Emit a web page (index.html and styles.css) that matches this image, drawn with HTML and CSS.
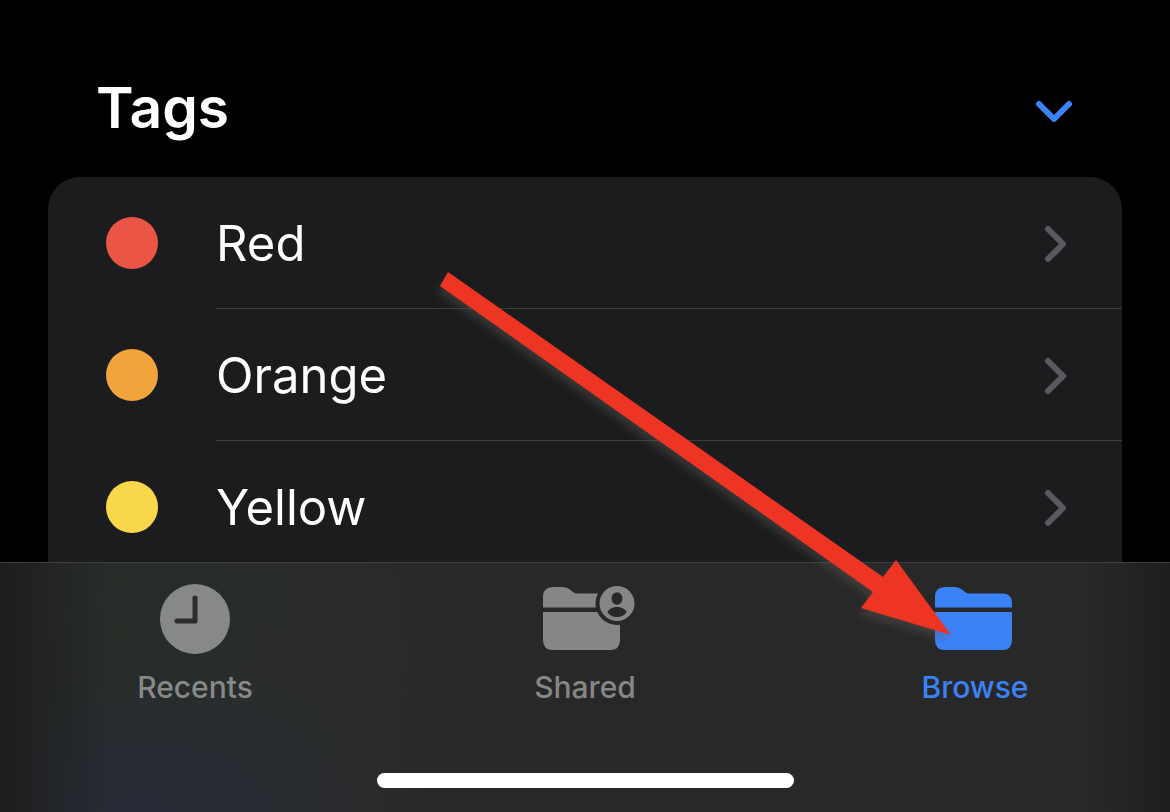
FILE: index.html
```html
<!DOCTYPE html>
<html lang="en">
<head>
    <meta charset="UTF-8">
    <meta name="viewport" content="width=device-width, initial-scale=1.0">
    <title>Browse</title>
    <link rel="stylesheet" href="styles.css">
</head>
<body>

<main class="content">
    <div class="section-header">
        <h1 class="section-title">Tags</h1>
        <button class="collapse" type="button" aria-label="Collapse tags">
            <svg width="40" height="26" viewBox="0 0 40 26"><path d="M5 5L20 20L35 5"/></svg>
        </button>
    </div>

    <!-- Tag list -->
    <nav class="tag-list">
        <a class="tag" href="#red">
            <span class="dot dot-red"></span>
            <span class="tag-body">Red
                <svg class="chevron" width="26" height="40" viewBox="0 0 26 40"><path d="M5 5L20 20L5 35"/></svg>
            </span>
        </a>
        <a class="tag" href="#orange">
            <span class="dot dot-orange"></span>
            <span class="tag-body">Orange
                <svg class="chevron" width="26" height="40" viewBox="0 0 26 40"><path d="M5 5L20 20L5 35"/></svg>
            </span>
        </a>
        <a class="tag" href="#yellow">
            <span class="dot dot-yellow"></span>
            <span class="tag-body">Yellow
                <svg class="chevron" width="26" height="40" viewBox="0 0 26 40"><path d="M5 5L20 20L5 35"/></svg>
            </span>
        </a>
    </nav>
</main>

<!-- Bottom tab bar -->
<footer class="tab-bar">
    <nav class="tabs">
        <a class="tab tab-recents" href="#recents">
            <svg width="100" height="72" viewBox="0 0 100 72">
                <circle cx="50" cy="36" r="35" fill="currentColor"/>
                <path d="M50 15V38H32" fill="none" stroke="#2a2d2b" stroke-width="5" stroke-linecap="round" stroke-linejoin="round"/>
            </svg>
            Recents
        </a>
        <a class="tab" href="#shared">
            <svg width="100" height="72" viewBox="0 0 100 72">
                <path d="M8 24.500V14Q8 4 18 4H28Q32 4 35 6.500L38 9Q40 10.500 43 10.500H75Q85 10.500 85 20V24.500Z" fill="currentColor"/>
                <path d="M8 29H85V57Q85 67 75 67H18Q8 67 8 57Z" fill="currentColor"/>
                <circle cx="82" cy="20.500" r="21.500" fill="#282828"/>
                <circle cx="82" cy="20.500" r="17.500" fill="currentColor"/>
                <ellipse cx="82" cy="15.500" rx="5.500" ry="6.200" fill="#282828"/>
                <path d="M72.500 29C74 25.500 78 24 82 24S90 25.500 91.500 29C90 32 86 34 82 34S74 32 72.500 29Z" fill="#282828"/>
            </svg>
            Shared
        </a>
        <a class="tab tab-active" href="#browse">
            <svg width="100" height="72" viewBox="0 0 100 72">
                <path d="M10 24.500V14Q10 4 20 4H30Q34 4 37 6.500L40 9Q42 10.500 45 10.500H77Q87 10.500 87 20V24.500Z" fill="currentColor"/>
                <path d="M10 29H87V57Q87 67 77 67H20Q10 67 10 57Z" fill="currentColor"/>
            </svg>
            Browse
        </a>
    </nav>
    <div class="home-indicator"></div>
</footer>

<!-- Arrow pointing at the Browse tab -->
<svg class="arrow" viewBox="0 0 1170 812" aria-hidden="true">
    <path d="M448 272L883 577L896 560L951 635L861 608L873 592L440 286Z"/>
</svg>

</body>
</html>
```
FILE: styles.css
```css
* {
    box-sizing: border-box;
}

body {
    margin: 0;
    height: 100vh;
    display: flex;
    flex-direction: column;
    position: relative;
    overflow: hidden;
    background-color: #000;
    color: #fff;
    font-family: Inter, "Liberation Sans", sans-serif;
}

a {
    color: inherit;
    text-decoration: none;
}

.content {
    flex: 1;
    min-height: 0;
    overflow: hidden;
    padding: 72px 48px 0;
}

.section-header {
    display: flex;
    justify-content: space-between;
    align-items: center;
    padding: 0 48px;
    margin-bottom: 33px;
}

.section-title {
    margin: 0;
    font-size: 57px;
    font-weight: 600;
    line-height: 72px;
}

.collapse {
    display: flex;
    padding: 8px 0 0;
    border: 0;
    background: none;
    color: #3b82f7;
    cursor: pointer;
}

.collapse path,
.chevron path {
    fill: none;
    stroke: currentColor;
    stroke-width: 6;
    stroke-linecap: round;
    stroke-linejoin: round;
}

/* Tag list */
.tag-list {
    background-color: #1c1c1e;
    border-radius: 32px 32px 0 0;
}

.tag {
    display: flex;
    align-items: center;
    gap: 58px;
    padding-left: 58px;
    font-size: 49px;
}

.dot {
    width: 52px;
    height: 52px;
    border-radius: 50%;
}

.dot-red {
    background-color: #eb5545;
}

.dot-orange {
    background-color: #f1a33c;
}

.dot-yellow {
    background-color: #f8d74a;
}

.tag-body {
    flex: 1;
    display: flex;
    justify-content: space-between;
    align-items: center;
    height: 132px;
    padding: 2px 53px 0 0;
    border-bottom: 1px solid #3d3d40;
}

.chevron {
    color: #5a5a5e;
}

.tab-bar {
    display: flex;
    flex-direction: column;
    justify-content: space-between;
    height: 250px;
    padding: 20px 0 24px;
    border-top: 1px solid #404040;
    background:
        linear-gradient(90deg, rgba(28, 28, 28, 0.9), rgba(28, 28, 28, 0) 9%, rgba(28, 28, 28, 0) 93%, rgba(28, 28, 28, 0.8)),
        radial-gradient(ellipse 260px 160px at 12% 100%, #262b36, rgba(38, 43, 54, 0)),
        radial-gradient(ellipse 300px 240px at 10% 15%, #272d28, rgba(39, 45, 40, 0)),
        radial-gradient(ellipse 240px 400px at 22% 50%, #2c2d2d, rgba(44, 45, 45, 0)),
        #282828;
}

.tabs {
    display: grid;
    grid-template-columns: repeat(3, 1fr);
}

.tab {
    display: flex;
    flex-direction: column;
    align-items: center;
    gap: 14px;
    color: #868686;
    font-size: 30px;
    font-weight: 500;
    line-height: 36px;
}

.tab-recents {
    color: #868988;
}

.tab-active {
    color: #3b82f7;
}

.home-indicator {
    align-self: center;
    width: 417px;
    height: 15px;
    border-radius: 8px;
    background-color: #fff;
}

/* Arrow lies over the whole screen */
.arrow {
    position: absolute;
    inset: 0;
    width: 100%;
    height: 100%;
    pointer-events: none;
    filter: drop-shadow(-2px 6px 4px rgba(100, 92, 88, 0.4));
}

.arrow path {
    fill: #ee3524;
}
```
